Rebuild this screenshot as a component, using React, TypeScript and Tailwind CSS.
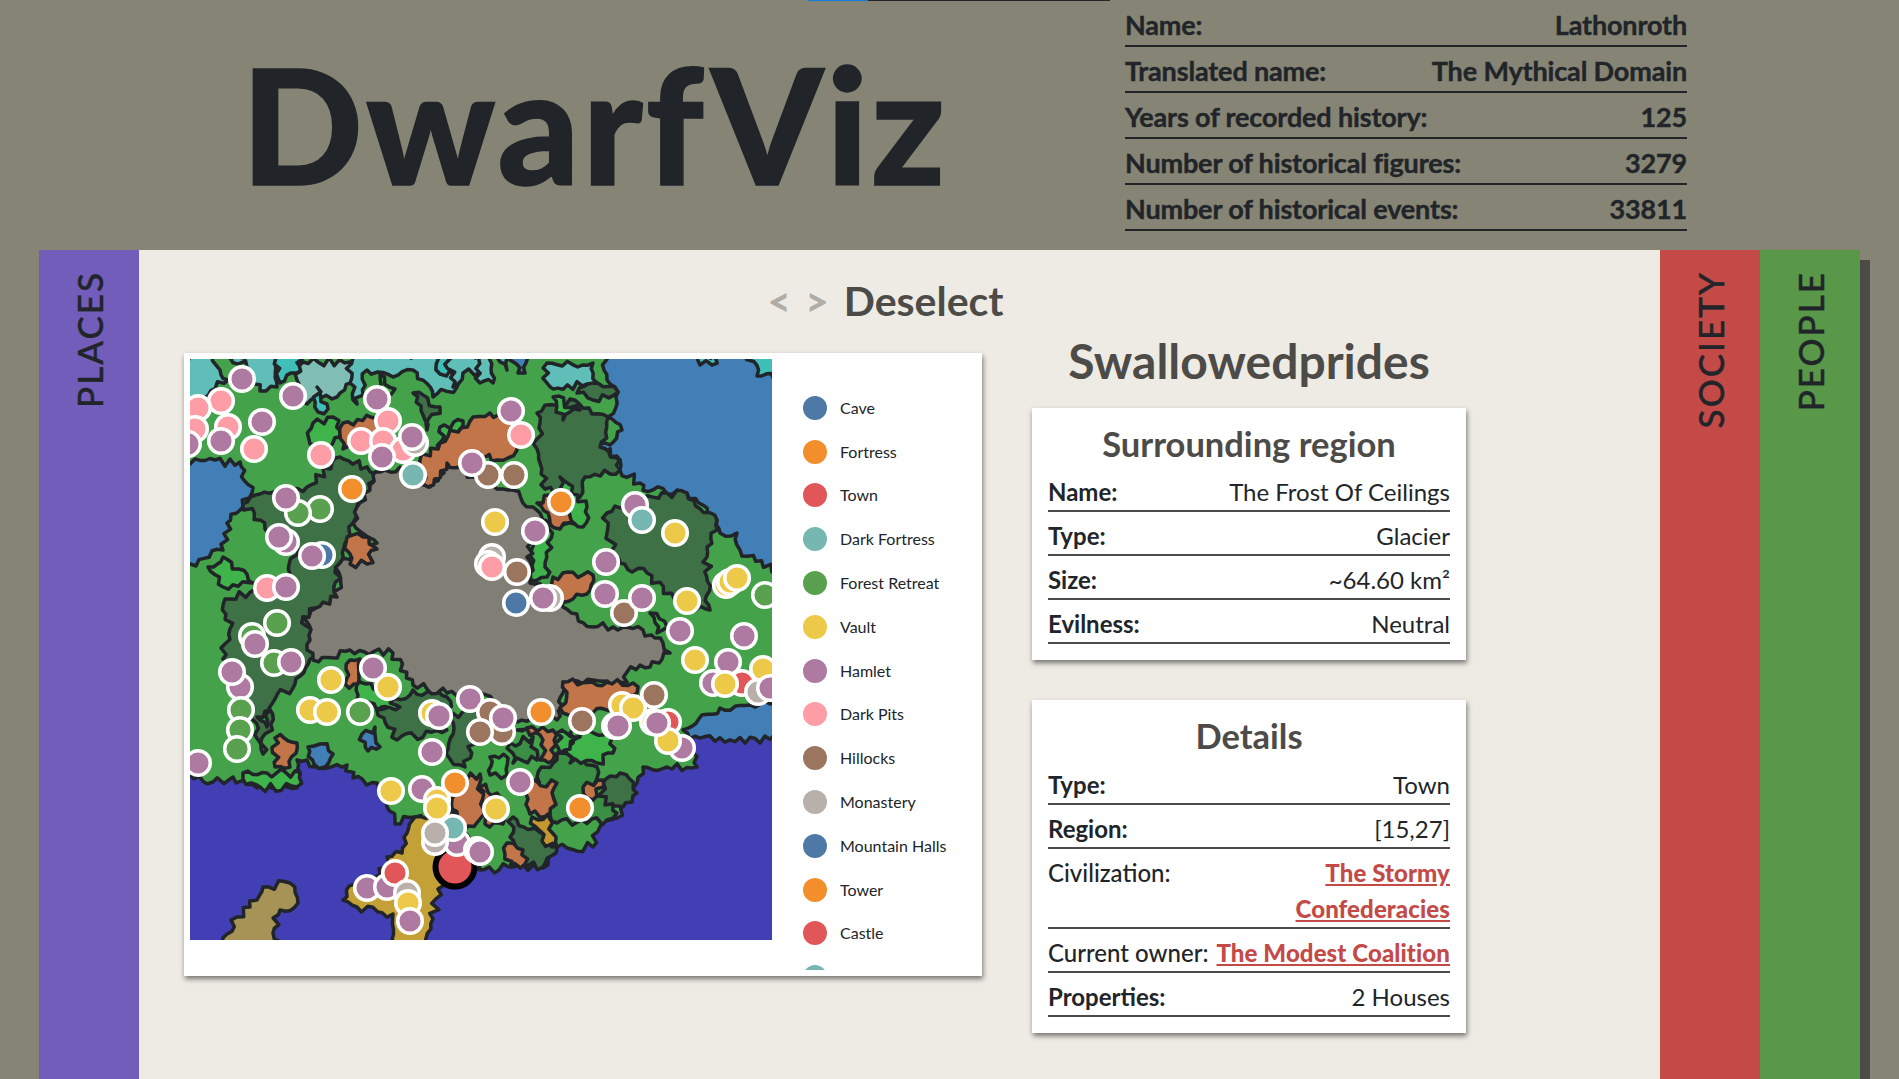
const C = {
  cave: '#4e79a7',
  orange: '#f28e2c',
  town: '#e15759',
  fort: '#76b7b2',
  forest: '#59a14f',
  vault: '#edc949',
  hamlet: '#af7aa1',
  pits: '#ff9da7',
  hill: '#9c755f',
  mono: '#bab0ab',
};

const LEGEND: [string, string][] = [
  ['Cave', C.cave],
  ['Fortress', C.orange],
  ['Town', C.town],
  ['Dark Fortress', C.fort],
  ['Forest Retreat', C.forest],
  ['Vault', C.vault],
  ['Hamlet', C.hamlet],
  ['Dark Pits', C.pits],
  ['Hillocks', C.hill],
  ['Monastery', C.mono],
  ['Mountain Halls', C.cave],
  ['Tower', C.orange],
  ['Castle', C.town],
  ['', C.fort],
];

type Pt = [number, number];

// small seeded noise so region borders look like the jagged world map
let seed = 7;
function rnd() {
  seed = (seed * 16807) % 2147483647;
  return seed / 2147483647;
}

function jag(points: Pt[]) {
  const out: string[] = [];
  points.forEach((p, i) => {
    const q = points[(i + 1) % points.length];
    const dx = q[0] - p[0];
    const dy = q[1] - p[1];
    const len = Math.hypot(dx, dy);
    const steps = Math.max(1, Math.round(len / 5));
    for (let s = 0; s < steps; s++) {
      const t = s / steps;
      const n = s === 0 ? 0 : (rnd() - 0.5) * 9;
      const x = p[0] + dx * t + (-dy / (len || 1)) * n;
      const y = p[1] + dy * t + (dx / (len || 1)) * n;
      out.push(x.toFixed(1) + ',' + y.toFixed(1));
    }
  });
  return out.join(' ');
}

const MID = '#43a24a';
const DARK = '#3f7146';
const BRIGHT = '#3fb44a';
const DEEP = '#3a8f44';
const BROWN = '#c27548';
const TEAL = '#5fbfb8';
const TEAL2 = '#3fbfb8';
const TEAL3 = '#80bdb5';

const REGIONS: [string, Pt[]][] = [
  // ocean
  ['#413fb3', [[-10, 390], [600, 380], [600, 600], [-10, 600]]],
  // main land mass
  [MID, [[-10, -10], [412, -10], [417, 21], [428, 33], [418, 58], [432, 71], [410, 88], [430, 101], [430, 111], [450, 124], [453, 131], [497, 134], [527, 161], [530, 174], [547, 174], [550, 191], [600, 220], [600, 344], [530, 349], [493, 371], [507, 408], [477, 408], [453, 408], [447, 424], [427, 459], [410, 468], [403, 488], [377, 489], [367, 488], [353, 509], [323, 508], [290, 511], [260, 470], [225, 458], [205, 465], [197, 448], [187, 424], [163, 419], [157, 406], [127, 408], [117, 401], [107, 401], [110, 414], [107, 429], [67, 429], [43, 418], [23, 423], [0, 416], [-10, 416], [-10, 209], [33, 191], [37, 164], [53, 148], [62, 134], [50, 103], [-10, 103]]],
  // sand peninsula and tan island
  ['#c4a136', [[225, 458], [265, 450], [280, 480], [290, 510], [248, 530], [243, 560], [238, 590], [207, 590], [203, 555], [167, 548], [153, 541], [165, 525], [190, 515], [197, 498], [212, 494], [217, 474]]],
  ['#a69355', [[33, 590], [47, 558], [60, 548], [73, 528], [100, 524], [108, 544], [90, 551], [83, 574], [90, 590]]],
  // little lakes and the top sea
  ['#427fb6', [[323, -5], [340, -5], [335, 14], [328, 14]]],
  ['#427fb6', [[172, 375], [185, 368], [190, 388], [178, 392]]],
  ['#427fb6', [[118, 388], [130, 385], [143, 395], [135, 408], [124, 405]]],
  // teal glaciers along the top
  [TEAL, [[-5, -5], [23, -5], [30, 11], [38, 21], [7, 38], [-5, 38]]],
  [TEAL, [[38, -5], [85, -5], [87, 28], [70, 32], [57, 8]]],
  [TEAL2, [[87, -5], [113, -5], [107, 14], [90, 24]]],
  [TEAL3, [[113, 3], [160, 3], [167, 14], [147, 38], [117, 45], [107, 21]]],
  [TEAL2, [[127, 28], [138, 50], [128, 53]]],
  [TEAL, [[160, -5], [257, -5], [267, 28], [243, 38], [223, 11], [203, 18], [177, 11], [167, 45], [160, 24]]],
  [TEAL2, [[243, -5], [257, -5], [260, 11], [250, 15]]],
  [TEAL, [[257, -5], [290, -5], [290, 14], [273, 14], [263, 28]]],
  [TEAL, [[290, -5], [303, -5], [303, 24], [290, 24]]],
  [TEAL2, [[303, -5], [323, -5], [317, 11]]],
  [TEAL, [[357, 4], [403, 4], [407, 24], [363, 30], [357, 24]]],
  [TEAL2, [[557, -5], [590, -5], [590, 19], [567, 17]]],
  [TEAL2, [[507, -5], [530, -5], [522, 6], [510, 6]]],
  // dark forests
  [DARK, [[347, 54], [380, 40], [418, 58], [410, 88], [430, 101], [430, 111], [395, 118], [390, 138], [355, 130], [347, 90], [350, 64]]],
  [DARK, [[417, 154], [477, 134], [497, 134], [527, 161], [517, 198], [520, 251], [490, 248], [457, 214], [430, 204], [417, 174]]],
  [DARK, [[53, 145], [70, 135], [117, 128], [150, 98], [190, 114], [167, 148], [163, 164], [150, 204], [147, 238], [113, 258], [125, 290], [120, 300], [105, 325], [85, 340], [73, 395], [60, 350], [48, 320], [33, 300], [40, 270], [35, 240], [75, 230], [100, 220], [105, 180], [75, 170]]],
  [DARK, [[187, 351], [223, 331], [257, 338], [257, 371], [207, 381]]],
  [DARK, [[263, 354], [290, 354], [275, 408], [260, 400]]],
  [DARK, [[413, 424], [430, 414], [447, 434], [433, 448], [413, 441]]],
  [DARK, [[323, 458], [367, 488], [353, 508], [333, 504], [320, 478]]],
  [DARK, [[223, 34], [250, 48], [237, 71]]],
  [DARK, [[387, 34], [403, 24], [428, 33], [403, 41]]],
  // deeper green patches
  [DEEP, [[347, 418], [367, 394], [407, 408], [403, 431], [427, 454], [417, 461], [367, 464], [350, 450]]],
  [DEEP, [[320, 384], [343, 378], [347, 401], [323, 404]]],
  // bright green patches
  [BRIGHT, [[123, 64], [143, 58], [150, 78], [133, 88], [120, 85]]],
  [BRIGHT, [[18, 208], [33, 198], [63, 224], [33, 228]]],
  [BRIGHT, [[250, 68], [273, 62], [273, 91], [250, 91]]],
  [BRIGHT, [[190, 15], [205, 30], [185, 40]]],
  [BRIGHT, [[340, 158], [360, 164], [357, 218], [340, 221]]],
  [BRIGHT, [[370, 118], [397, 148], [393, 168], [370, 165]]],
  [BRIGHT, [[363, 38], [390, 51], [373, 61]]],
  [BRIGHT, [[67, 358], [80, 351], [77, 368]]],
  [BRIGHT, [[53, 414], [77, 414], [110, 414], [107, 428], [70, 428], [53, 420]]],
  [BRIGHT, [[167, 321], [197, 334], [210, 348], [187, 351], [167, 341]]],
  [BRIGHT, [[380, 374], [423, 371], [423, 394], [407, 404], [380, 404]]],
  [BRIGHT, [[367, 374], [390, 378], [370, 394]]],
  [BRIGHT, [[300, 398], [318, 399], [317, 416], [300, 416]]],
  [BRIGHT, [[460, 254], [477, 268], [467, 274]]],
  // grey wasteland in the middle
  ['#807e75', [[190, 113], [210, 108], [240, 128], [257, 104], [283, 118], [323, 131], [343, 148], [350, 154], [337, 198], [340, 224], [363, 231], [373, 248], [403, 268], [423, 268], [453, 271], [473, 284], [480, 294], [460, 308], [437, 313], [437, 323], [373, 323], [373, 334], [367, 361], [327, 363], [290, 334], [257, 334], [223, 326], [203, 294], [160, 291], [123, 301], [117, 291], [120, 281], [113, 258], [147, 238], [150, 204], [187, 184], [163, 164], [167, 148], [183, 116]]],
  // brown hills
  [BROWN, [[230, 101], [250, 84], [283, 58], [300, 54], [323, 64], [327, 91], [307, 101], [290, 94], [283, 118], [257, 104], [238, 128]]],
  [BROWN, [[153, 64], [187, 58], [190, 75], [167, 91], [153, 90]]],
  [BROWN, [[157, 178], [173, 178], [187, 190], [177, 205], [160, 205]]],
  [BROWN, [[363, 218], [403, 216], [397, 235], [383, 240], [370, 240], [365, 230]]],
  [BROWN, [[347, 144], [360, 136], [385, 165], [370, 170]]],
  [BROWN, [[373, 323], [417, 323], [443, 324], [447, 334], [417, 351], [390, 358], [373, 354]]],
  [BROWN, [[327, 371], [363, 371], [363, 401], [350, 401], [353, 381]]],
  [BROWN, [[340, 424], [367, 424], [360, 455], [340, 455], [338, 440]]],
  [BROWN, [[317, 484], [333, 491], [335, 505], [320, 508], [315, 495]]],
  [BROWN, [[290, 428], [307, 434], [313, 465], [295, 465]]],
  [BROWN, [[393, 428], [413, 421], [403, 441]]],
  [BROWN, [[85, 379], [107, 384], [100, 408], [85, 408]]],
  [BROWN, [[160, 301], [170, 300], [168, 325], [155, 325]]],
  [BROWN, [[268, 420], [290, 415], [290, 460], [275, 470], [262, 450]]],
  ['#c4962f', [[342, 458], [358, 455], [367, 488], [352, 482]]],
];

const SHAPES = REGIONS.map(([fill, pts]) => ({ fill, d: jag(pts) }));

const PINS: [number, number, string][] = [
  [52, 20, C.hamlet], [31, 42, C.pits], [8, 49, C.pits], [103, 37, C.hamlet], [72, 63, C.hamlet],
  [38, 68, C.pits], [5, 70, C.pits], [-2, 85, C.hamlet], [31, 82, C.hamlet], [64, 90, C.pits],
  [131, 96, C.pits], [187, 40, C.hamlet], [198, 62, C.pits], [171, 82, C.pits], [193, 82, C.pits],
  [213, 91, C.pits], [225, 84, C.mono], [192, 98, C.hamlet], [222, 78, C.hamlet], [223, 116, C.fort],
  [162, 130, C.orange], [298, 116, C.hill], [324, 116, C.hill], [282, 104, C.hamlet], [130, 150, C.forest],
  [108, 154, C.forest], [96, 139, C.hamlet], [96, 183, C.hamlet], [89, 178, C.hamlet], [132, 196, C.cave],
  [122, 197, C.hamlet], [77, 229, C.pits], [96, 228, C.hamlet], [87, 264, C.forest], [62, 277, C.forest],
  [65, 285, C.hamlet], [321, 52, C.hamlet], [331, 76, C.pits], [371, 143, C.orange], [445, 146, C.hamlet],
  [452, 161, C.fort], [485, 174, C.vault], [305, 163, C.vault], [345, 172, C.hamlet], [302, 198, C.mono],
  [298, 205, C.mono], [302, 208, C.pits], [327, 213, C.hill], [326, 244, C.cave], [360, 239, C.mono],
  [353, 239, C.hamlet], [416, 203, C.hamlet], [434, 254, C.hill], [415, 235, C.hamlet], [452, 239, C.hamlet],
  [497, 242, C.vault], [490, 272, C.hamlet], [536, 226, C.vault], [540, 223, C.vault], [547, 219, C.vault],
  [575, 236, C.forest], [554, 277, C.hamlet], [50, 328, C.hamlet], [42, 313, C.hamlet], [51, 351, C.forest],
  [50, 371, C.forest], [47, 390, C.forest], [8, 404, C.hamlet], [84, 304, C.forest], [101, 303, C.hamlet],
  [141, 321, C.vault], [198, 328, C.vault], [183, 309, C.hamlet], [120, 351, C.vault], [137, 353, C.vault],
  [170, 353, C.forest], [242, 354, C.vault], [249, 357, C.hamlet], [280, 340, C.hamlet], [300, 353, C.hill],
  [312, 373, C.hill], [290, 373, C.hill], [313, 359, C.hamlet], [242, 393, C.hamlet], [201, 432, C.vault],
  [232, 430, C.hamlet], [265, 424, C.orange], [247, 441, C.vault], [247, 449, C.vault], [505, 301, C.vault],
  [538, 303, C.hamlet], [523, 324, C.hamlet], [552, 324, C.town], [535, 325, C.vault], [573, 310, C.vault],
  [568, 333, C.mono], [580, 329, C.hamlet], [432, 346, C.vault], [443, 349, C.vault], [464, 336, C.hill],
  [425, 367, C.vault], [428, 367, C.hamlet], [351, 353, C.orange], [392, 362, C.hill], [478, 363, C.town],
  [463, 363, C.vault], [492, 389, C.hamlet], [478, 382, C.vault], [467, 364, C.hamlet], [330, 423, C.hamlet],
  [390, 449, C.orange], [306, 450, C.vault],
];

// drawn after the selected site
const TOP_PINS: [number, number, string][] = [
  [267, 484, C.hamlet], [245, 483, C.mono], [263, 469, C.fort], [245, 474, C.mono], [287, 491, C.hamlet],
  [290, 493, C.hamlet], [177, 529, C.hamlet], [197, 528, C.hamlet], [205, 514, C.town], [217, 534, C.mono],
  [218, 544, C.vault], [220, 562, C.hamlet],
];

function WorldMap() {
  return (
    <svg width="582" height="581" viewBox="0 0 582 581" className="shrink-0 bg-[#427fb6]">
      {SHAPES.map((s, i) => (
        <polygon key={i} points={s.d} fill={s.fill} stroke="#212529" strokeWidth="3.5" strokeLinejoin="round" />
      ))}
      {PINS.map(([x, y, c], i) => (
        <circle key={i} cx={x} cy={y} r="12.3" fill={c} stroke="#fff" strokeWidth="3.5" />
      ))}
      <circle cx="265" cy="508" r="19.5" fill={C.town} stroke="#000" strokeWidth="6" />
      {TOP_PINS.map(([x, y, c], i) => (
        <circle key={i} cx={x} cy={y} r="12.3" fill={c} stroke="#fff" strokeWidth="3.5" />
      ))}
    </svg>
  );
}

function Tab({ label, className }: { label: string; className: string }) {
  return (
    <div className={`w-[100px] shrink-0 flex justify-center pt-[21px] ${className}`}>
      <span className="[writing-mode:vertical-rl] rotate-180 text-[35px] font-medium leading-none tracking-[2px] text-[#212529] [-webkit-text-stroke:0.4px_#212529] h-fit">
        {label}
      </span>
    </div>
  );
}

function Row({ label, children, light, nowrap }: { label: string; children: React.ReactNode; light?: boolean; nowrap?: boolean }) {
  return (
    <div className="flex justify-between border-b-2 border-[#4d4b48] pt-[6px] text-[24px] leading-[36px] text-[#212529]">
      <span className={`shrink-0 ${light ? 'font-medium' : 'font-bold'}`}>{label}</span>
      <span className={`text-right ${nowrap ? 'whitespace-nowrap' : ''}`}>{children}</span>
    </div>
  );
}

function Link({ children }: { children: React.ReactNode }) {
  return <a className="font-black tracking-[0.1px] text-[#c44a48] underline">{children}</a>;
}

function Card({ title, children }: { title: string; children: React.ReactNode }) {
  return (
    <div className="bg-white px-4 pb-4 shadow-[1px_3px_5px_rgba(0,0,0,0.5)]">
      <h2 className="h-[60px] flex items-center justify-center pt-[11px] text-[34.5px] font-bold text-[#4d4b48]">{title}</h2>
      {children}
    </div>
  );
}

function StatRow({ label, value }: { label: string; value: string }) {
  return (
    <div className="flex justify-between border-b-2 border-[#212529] h-[46px] items-center pt-[4px] text-[27px] font-bold tracking-[-0.15px] text-[#212529] [-webkit-text-stroke:0.4px_#212529]">
      <span>{label}</span>
      <span>{value}</span>
    </div>
  );
}

export default function App() {
  return (
    <div className="relative h-[1079px] overflow-hidden bg-[#868474] font-['Lato',sans-serif]">
      {/* page loading bar */}
      <div className="absolute left-[808px] top-0 flex h-[1px] w-[302px]">
        <div className="w-[60px] bg-[#0d7ddb]" />
        <div className="flex-1 bg-[#212529]" />
      </div>

      <header className="flex h-[250px]">
        <h1 className="w-[1195px] flex items-center justify-end pb-[4px] pr-[247px] text-[160px] font-black leading-none tracking-[3px] text-[#212529] [-webkit-text-stroke:1.5px_#212529]">
          DwarfViz
        </h1>
        <div className="w-[562px] ml-[-70px] mt-[1px]">
          <StatRow label="Name:" value="Lathonroth" />
          <StatRow label="Translated name:" value="The Mythical Domain" />
          <StatRow label="Years of recorded history:" value="125" />
          <StatRow label="Number of historical figures:" value="3279" />
          <StatRow label="Number of historical events:" value="33811" />
        </div>
      </header>

      <main className="ml-[39px] flex h-[829px] w-[1821px] bg-[#eeebe4] shadow-[10px_10px_0_#4d4b48]">
        <Tab label="PLACES" className="bg-[#725dbb]" />

        <section className="flex-1 min-w-0">
          <div className="flex h-[84px] items-center justify-center pr-[28px] pt-[18px]">
            <span className="text-[40px] font-black text-[#b0ada6]">&lt;</span>
            <span className="ml-[15px] text-[40px] font-black text-[#b0ada6]">&gt;</span>
            <span className="ml-[15px] text-[41px] font-bold text-[#4d4b48]">Deselect</span>
          </div>

          <div className="flex pl-[45px]">
            <div className="mt-[19px] flex h-[623px] w-[798px] bg-white p-[6px] shadow-[1px_3px_5px_rgba(0,0,0,0.5)]">
              <WorldMap />
              <div className="h-[611px] flex-1 overflow-hidden pl-[31px] pt-[27px]">
                {LEGEND.map(([name, color], i) => (
                  <div key={i} className="flex h-[43.8px] items-center text-[16px] text-[#212529]">
                    <span className="mr-[13px] h-[24px] w-[24px] rounded-full" style={{ background: color }} />
                    {name}
                  </div>
                ))}
              </div>
            </div>

            <div className="ml-[50px] w-[434px]">
              <h2 className="mb-[18px] h-[56px] text-center text-[48px] font-bold leading-[54px] text-[#4d4b48]">Swallowedprides</h2>
              <Card title="Surrounding region">
                <Row label="Name:">The Frost Of Ceilings</Row>
                <Row label="Type:">Glacier</Row>
                <Row label="Size:">~64.60 km²</Row>
                <Row label="Evilness:">Neutral</Row>
              </Card>
              <div className="h-[40px]" />
              <Card title="Details">
                <div className="mt-[1px]">
                  <Row label="Type:">Town</Row>
                  <Row label="Region:">[15,27]</Row>
                  <Row label="Civilization:" light><Link>The Stormy Confederacies</Link></Row>
                  <Row label="Current owner:" light nowrap><Link>The Modest Coalition</Link></Row>
                  <Row label="Properties:">2 Houses</Row>
                </div>
              </Card>
            </div>
          </div>
        </section>

        <Tab label="SOCIETY" className="bg-[#c44a48]" />
        <Tab label="PEOPLE" className="bg-[#599849]" />
      </main>
    </div>
  );
}
